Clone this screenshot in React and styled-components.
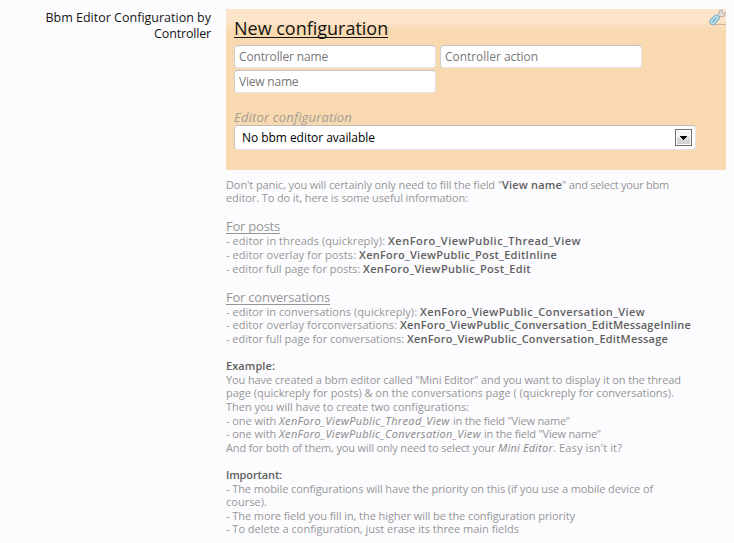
import React from 'react';
import styled, { createGlobalStyle } from 'styled-components';

const Global = createGlobalStyle`
  * { box-sizing: border-box; }
  body {
    margin: 0;
    background: #fcfcff;
    font-family: "Open Sans", "Noto Sans", sans-serif;
    overflow: hidden;
  }
`;

const Unit = styled.div`
  display: grid;
  grid-template-columns: 211px 500px;
  column-gap: 15px;
  height: 543px;
  padding-top: 9px;
  overflow: hidden;
`;

const Label = styled.div`
  display: flex;
  flex-direction: column;
  align-items: flex-end;
  padding-top: 1px;
  font-size: 12.5px;
  line-height: 16px;
  color: #141414;
`;

const LabelLine = styled.span`
  letter-spacing: ${(p) => p.$ls}px;
`;

const Panel = styled.fieldset`
  position: relative;
  height: 161px;
  margin: 0;
  padding: 8px 8px 0;
  border: 0;
  background: linear-gradient(#fce5ca 0, #fce4c8 12px, #f8d9b0 23px);
`;

const Title = styled.h2`
  width: max-content;
  margin: 0 0 7px;
  height: 21px;
  font-size: 18px;
  font-weight: 400;
  line-height: 22px;
  letter-spacing: ${(p) => p.$ls}px;
  color: #141414;
  border-bottom: 1px solid #141414;
`;

const Fields = styled.div`
  display: flex;
  flex-wrap: wrap;
  gap: 2px 4px;
  width: 420px;
`;

const Input = styled.input`
  width: 202px;
  height: 23px;
  padding: 0 4px;
  border: 1px solid #e6e6ec;
  border-top-color: #c0c0c6;
  border-left-color: #d0d0d4;
  border-radius: 4px;
  background: #fff;
  font: 12px "Open Sans", sans-serif;
  letter-spacing: ${(p) => p.$ls}px;
  outline: none;
  &::placeholder { color: #777; opacity: 1; }
`;

const Legend = styled.div`
  margin-top: 16px;
  height: 16px;
  font-size: 13px;
  font-style: italic;
  line-height: 17px;
  letter-spacing: 0.16px;
  color: #a39c93;
`;

const Select = styled.div`
  display: flex;
  align-items: center;
  justify-content: space-between;
  width: 462px;
  height: 25px;
  padding: 0 3px 0 7px;
  border: 1px solid #e2e2ea;
  border-top-color: #bcbcc2;
  border-left-color: #c8c8cc;
  border-radius: 4px;
  background: #fff;
  font-size: 12px;
  letter-spacing: -0.05px;
  color: #000;
`;

const Arrow = styled.span`
  display: flex;
  align-items: center;
  justify-content: center;
  width: 17px;
  height: 17px;
  padding-top: 1px;
  border: 1px solid #707070;
  background: linear-gradient(#f3f3f3 50%, #dcdcdc 50%, #cfcfcf);
  box-shadow: inset 0 0 0 1px #fbfbfb;
`;

const Tool = styled.svg`
  position: absolute;
  top: 0;
  right: 0;
  width: 17px;
  height: 17px;
`;

const Explain = styled.div`
  padding-top: 7.7px;
  color: #969696;
  font-size: 11px;
`;

const Line = styled.div`
  height: ${(p) => p.$h || 13.6}px;
  line-height: 14px;
  white-space: pre;
`;

const Seg = styled.span`
  letter-spacing: ${(p) => p.$ls}px;
`;

const Strong = styled(Seg)`
  font-weight: 600;
  color: #606060;
`;

const Em = styled(Seg)`
  font-style: italic;
  color: #888;
`;

const Heading = styled(Seg)`
  display: inline-block;
  vertical-align: top;
  height: 16px;
  font-size: 13px;
  line-height: 16px;
  border-bottom: 1px solid #969696;
`;

const kinds = { n: Seg, b: Strong, i: Em, h: Heading };

const lines = [
  [['n', 'Don\'t panic, you will certainly only need to fill the field "', -0.107], ['b', 'View name', 0.19], ['n', '" and select your bbm', -0.237]],
  [['n', 'editor. To do it, here is some useful information:', -0.097]],
  [],
  [['h', 'For posts', -0.224]],
  [['n', '- editor in threads (quickreply): ', 0.063], ['b', 'XenForo_ViewPublic_Thread_View', 0.487]],
  [['n', '- editor overlay for posts: ', 0.065], ['b', 'XenForo_ViewPublic_Post_EditInline', 0.263]],
  [['n', '- editor full page for posts: ', -0.028], ['b', 'XenForo_ViewPublic_Post_Edit', 0.313]],
  [],
  [['h', 'For conversations', -0.216]],
  [['n', '- editor in conversations (quickreply): ', 0.053], ['b', 'XenForo_ViewPublic_Conversation_View', 0.379]],
  [['n', '- editor overlay forconversations: ', 0.056], ['b', 'XenForo_ViewPublic_Conversation_EditMessageInline', 0.177]],
  [['n', '- editor full page for conversations: ', -0.015], ['b', 'XenForo_ViewPublic_Conversation_EditMessage', 0.197]],
  [],
  [['b', 'Example:', 0.083]],
  [['n', 'You have created a bbm editor called "Mini Editor" and you want to display it on the thread', -0.107]],
  [['n', 'page (quickreply for posts) & on the conversations page ( (quickreply for conversations).', 0.001]],
  [['n', 'Then you will have to create two configurations:', -0.029]],
  [['n', '- one with ', -0.056], ['i', 'XenForo_ViewPublic_Thread_View ', 0.342], ['n', 'in the field "View name"', -0.207]],
  [['n', '- one with ', -0.056], ['i', 'XenForo_ViewPublic_Conversation_View ', 0.326], ['n', 'in the field "View name"', -0.207]],
  [['n', 'And for both of them, you will only need to select your ', -0.15], ['i', 'Mini Editor', 0.188], ['n', ". Easy isn't it?", 0.126]],
  [],
  [['b', 'Important:', -0.125]],
  [['n', '- The mobile configurations will have the priority on this (if you use a mobile device of', -0.1]],
  [['n', 'course).', 0.04]],
  [['n', '- The more field you fill in, the higher will be the configuration priority', -0.077]],
  [['n', '- To delete a configuration, just erase its three main fields', -0.013]],
];

export default function App() {
  return (
    <>
      <Global />
      <Unit>
        <Label>
          <LabelLine $ls={0}>Bbm Editor Configuration by</LabelLine>
          <LabelLine $ls={-0.17}>Controller</LabelLine>
        </Label>
        <div>
          <Panel>
            <Tool viewBox="0 0 17 17" aria-hidden="true">
              <path d="M4 15.4h13" stroke="#b59c80" strokeWidth="1" opacity=".7" />
              <path d="M8.5 8.5l3.6-3.8" stroke="#a9a5a2" strokeWidth="3.2" />
              <path d="M12.4.8L10 2.3l-.4 2.8 2.1 2.5 3.1-.3 2-2.6-.5-1.3-1.8 1.2-1.7-1.3.8-1.6z" fill="#e3dfdc" stroke="#aaa5a2" strokeWidth=".9" />
              <path d="M8.6 8.4l3-3" stroke="#e0dedc" strokeWidth="1.5" />
              <path d="M3.7 12.8l3.6-3.9" stroke="#77a9c2" strokeWidth="6.6" strokeLinecap="round" />
              <path d="M3.7 12.8l3.6-3.9" stroke="#b9e0ef" strokeWidth="4.8" strokeLinecap="round" />
              <path d="M3.8 12.7l3.5-3.8" stroke="#79afc8" strokeWidth="1.3" strokeLinecap="round" />
            </Tool>
            <Title $ls={-0.01}>New configuration</Title>
            <Fields>
              <Input placeholder="Controller name" $ls={-0.149} />
              <Input placeholder="Controller action" $ls={-0.039} />
              <Input placeholder="View name" $ls={-0.2} />
            </Fields>
            <Legend>Editor configuration</Legend>
            <Select>
              <span>No bbm editor available</span>
              <Arrow>
                <svg width="7" height="4" viewBox="0 0 7 4" shapeRendering="crispEdges">
                  <path d="M0 0h7v1H6v1H5v1H4v1H3V3H2V2H1V1H0z" fill="#000" />
                </svg>
              </Arrow>
            </Select>
          </Panel>
          <Explain>
            {lines.map((segs, i) => (
              <Line key={i} $h={segs[0]?.[0] === 'h' ? 16 : undefined}>
                {segs.map(([kind, text, ls], j) => {
                  const Part = kinds[kind];
                  return <Part key={j} $ls={ls}>{text}</Part>;
                })}
              </Line>
            ))}
          </Explain>
        </div>
      </Unit>
    </>
  );
}
